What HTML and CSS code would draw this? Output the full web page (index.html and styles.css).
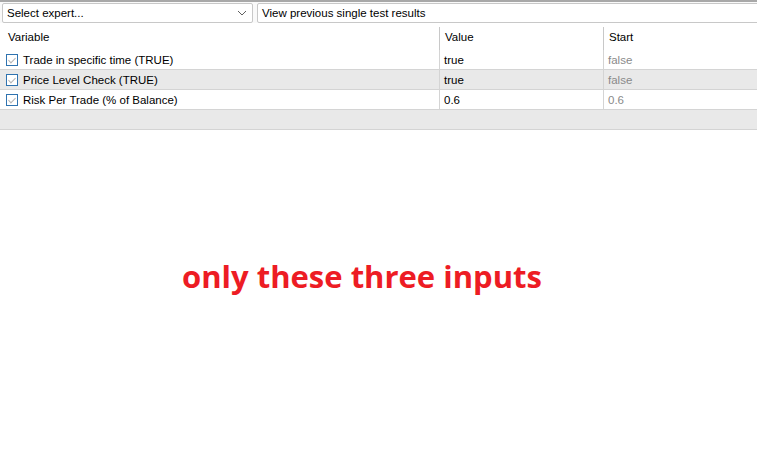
FILE: index.html
```html
<!DOCTYPE html>
<html lang="en">
<head>
    <meta charset="UTF-8">
    <title>Strategy Tester - Inputs</title>
    <link rel="stylesheet" href="styles.css">
</head>
<body>
    <div class="toolbar">
        <div class="select">
            <span>Select expert...</span>
            <svg class="caret" width="10" height="6" viewBox="0 0 10 6"><path d="M1 1 L5 5 L9 1" fill="none" stroke="#606060" stroke-width="1"/></svg>
        </div>
        <div class="field">View previous single test results</div>
    </div>

    <div class="grid">
        <div class="head first">Variable</div>
        <div class="head">Value</div>
        <div class="head">Start</div>

        <div class="cell first"><span class="check"></span>Trade in specific time (TRUE)</div>
        <div class="cell">true</div>
        <div class="cell muted">false</div>

        <div class="cell first alt"><span class="check"></span>Price Level Check (TRUE)</div>
        <div class="cell alt">true</div>
        <div class="cell alt muted">false</div>

        <div class="cell first"><span class="check"></span>Risk Per Trade (% of Balance)</div>
        <div class="cell">0.6</div>
        <div class="cell muted">0.6</div>

        <div class="filler"></div>
    </div>

    <div class="note">only these three inputs</div>
</body>
</html>
```

FILE: styles.css
```css
* {
    margin: 0;
    padding: 0;
    box-sizing: border-box;
}
body {
    background: #fff;
    font-family: "Liberation Sans", Arial, sans-serif;
    font-size: 11.5px;
    color: #000;
    width: 757px;
    height: 472px;
    overflow: hidden;
}
.toolbar {
    display: flex;
    gap: 4px;
    padding: 1px 0 0 2px;
    border-top: 2px solid #a8a8a8;
    background: #f9f9f9;
}
.select, .field {
    height: 20px;
    border: 1px solid #c8c8c8;
    border-radius: 2px;
    background: #fff;
    display: flex;
    align-items: center;
    padding-left: 4px;
}
.select {
    width: 251px;
    justify-content: space-between;
    padding-right: 5px;
}
.field {
    flex: 1;
    margin-right: -4px;
}
.grid {
    display: grid;
    grid-template-columns: 439px 164px 1fr;
}
.head {
    height: 23px;
    margin-top: 4px;
    padding: 4px 0 0 5px;
    border-left: 1px solid #c8c8c8;
}
.head.first {
    border-left: none;
    padding-left: 8px;
}
.cell {
    height: 20px;
    display: flex;
    align-items: center;
    padding-left: 4px;
    border-left: 1px solid #d4d4d4;
    border-bottom: 1px solid #d4d4d4;
}
.cell.first {
    border-left: none;
    padding-left: 6px;
}
.alt {
    background: #e9e9e9;
}
.muted {
    color: #8a8a8a;
}
.check {
    width: 12px;
    height: 12px;
    border: 1px solid #2f73b0;
    margin-right: 5px;
    position: relative;
    background: #fff;
}
.check::after {
    content: "";
    position: absolute;
    left: 3px;
    top: 1px;
    width: 3px;
    height: 6px;
    border-right: 1px solid #b4b4b4;
    border-bottom: 1px solid #b4b4b4;
    transform: rotate(45deg);
}
.filler {
    grid-column: 1 / -1;
    height: 20px;
    background: #e9e9e9;
    border-bottom: 1px solid #d4d4d4;
}
.note {
    margin: 125px 0 0 182px;
    font-family: "Open Sans", sans-serif;
    font-weight: bold;
    font-size: 31px;
    color: #ed1c24;
}
```
